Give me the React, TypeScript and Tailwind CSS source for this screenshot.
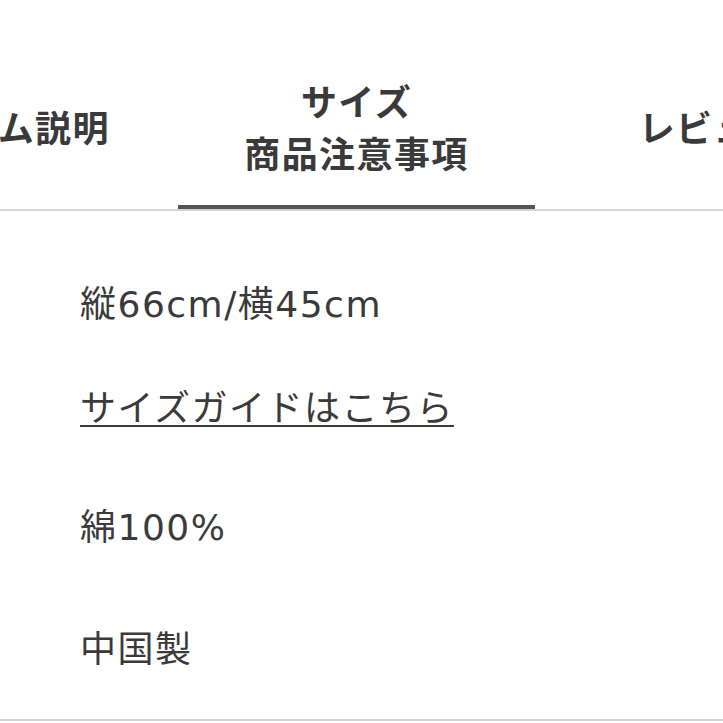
export default function App() {
  const tabs = [
    { id: "item", lines: ["アイテム説明"] },
    { id: "size", lines: ["サイズ", "商品注意事項"], active: true },
    { id: "review", lines: ["レビュー"] },
  ]

  return (
    <div className="w-[723px] h-[723px] overflow-hidden bg-white text-[#333] font-['Noto_Sans_CJK_JP',sans-serif]">
      {/* tab bar, scrolled so the active tab sits in the middle */}
      <div className="h-[211px] border-b-2 border-[#d4d4d4]">
        <div className="flex h-full -ml-[179px]">
          {tabs.map((tab) => (
            <div
              key={tab.id}
              className="relative w-[357px] shrink-0 flex flex-col items-center justify-center pt-[42px] text-[36px] leading-[52px] tracking-[1.4px] font-bold text-[#3a3a3a]"
            >
              {tab.lines.map((l) => (
                <span key={l} className="whitespace-nowrap">
                  {l}
                </span>
              ))}
              {tab.active && <span className="absolute left-0 right-0 bottom-0 h-[4px] bg-[#555]" />}
            </div>
          ))}
        </div>
      </div>

      <div className="h-[510px] border-b-2 border-[#d4d4d4] px-[80px] pt-[67px] text-[36px] leading-[54px] tracking-[1.5px] text-[#3a3a3a] font-['DejaVu_Sans','Noto_Sans_CJK_JP',sans-serif]">
        <p>縦66cm/横45cm</p>
        <p className="mt-[46px] font-['Noto_Sans_CJK_JP',sans-serif]">
          <a className="underline decoration-2 underline-offset-[4px]">サイズガイドはこちら</a>
        </p>
        <p className="mt-[69px]">綿100%</p>
        <p className="mt-[68px]">中国製</p>
      </div>
    </div>
  )
}
